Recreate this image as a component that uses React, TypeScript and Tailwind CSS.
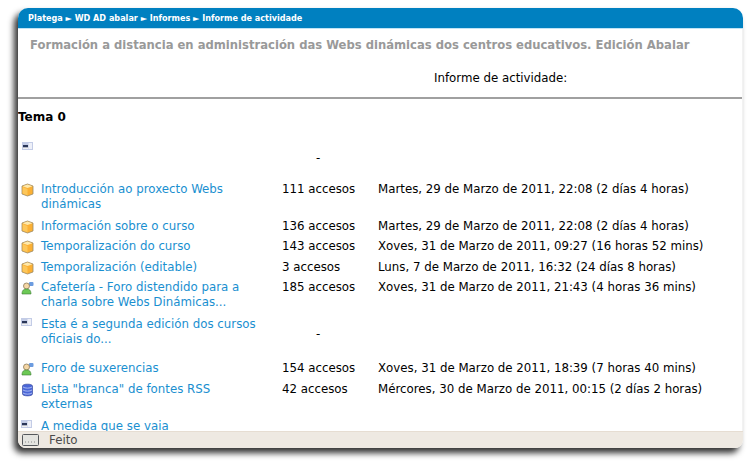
type IconKind = 'box' | 'forum' | 'label' | 'db';

interface Row {
  icon?: IconKind;
  title?: string;
  count?: string;
  date?: string;
  dash?: boolean;
  height: string;
}

const rows: Row[] = [
  { icon: 'box', title: 'Introducción ao proxecto Webs dinámicas', count: '111 accesos', date: 'Martes, 29 de Marzo de 2011, 22:08 (2 días 4 horas)', height: 'h-[37px]' },
  { icon: 'box', title: 'Información sobre o curso', count: '136 accesos', date: 'Martes, 29 de Marzo de 2011, 22:08 (2 días 4 horas)', height: 'h-[20.5px]' },
  { icon: 'box', title: 'Temporalización do curso', count: '143 accesos', date: 'Xoves, 31 de Marzo de 2011, 09:27 (16 horas 52 mins)', height: 'h-[20.5px]' },
  { icon: 'box', title: 'Temporalización (editable)', count: '3 accesos', date: 'Luns, 7 de Marzo de 2011, 16:32 (24 días 8 horas)', height: 'h-[20.5px]' },
  { icon: 'forum', title: 'Cafetería - Foro distendido para a charla sobre Webs Dinámicas...', count: '185 accesos', date: 'Xoves, 31 de Marzo de 2011, 21:43 (4 horas 36 mins)', height: 'h-[37px]' },
  { icon: 'label', title: 'Esta é a segunda edición dos cursos oficiais do...', dash: true, height: 'h-[44px]' },
  { icon: 'forum', title: 'Foro de suxerencias', count: '154 accesos', date: 'Xoves, 31 de Marzo de 2011, 18:39 (7 horas 40 mins)', height: 'h-[20.5px]' },
  { icon: 'db', title: 'Lista "branca" de fontes RSS externas', count: '42 accesos', date: 'Mércores, 30 de Marzo de 2011, 00:15 (2 días 2 horas)', height: 'h-[37px]' },
  { icon: 'label', title: 'A medida que se vaia', height: 'h-[20px]' },
];

function RowIcon({ kind }: { kind: IconKind }) {
  if (kind === 'box') {
    return (
      <svg width="13" height="14" viewBox="0 0 13 14">
        <path d="M6.5 1 L12 3 V11 L6.5 13 L1 11 V3 Z" fill="#fbb034" stroke="#9a8a68" strokeWidth="0.8" />
        <path d="M6.5 1.4 L11.4 3.2 L6.5 5 L1.6 3.2 Z" fill="#fde9ad" />
        <path d="M1.6 4 L6.5 6 V12.3 L1.6 10.6 Z" fill="#fdc75a" />
      </svg>
    );
  }
  if (kind === 'forum') {
    return (
      <svg width="13" height="14" viewBox="0 0 13 14">
        <rect x="8" y="1" width="4.5" height="4" rx="1" fill="#6c9ce0" />
        <circle cx="5.5" cy="5" r="3" fill="#f6d7a6" stroke="#8a7a58" strokeWidth="0.8" />
        <path d="M1 13 C1 9 3 8 5.5 8 C8 8 10 9 10 13 Z" fill="#6cc955" stroke="#3d7a33" strokeWidth="0.6" />
      </svg>
    );
  }
  if (kind === 'db') {
    return (
      <svg width="13" height="14" viewBox="0 0 13 14">
        <path d="M1.5 3 C1.5 0.5 11.5 0.5 11.5 3 V11 C11.5 13.5 1.5 13.5 1.5 11 Z" fill="#4a66d8" stroke="#2e3f96" strokeWidth="0.6" />
        <path d="M2 4 C4 5.5 9 5.5 11 4 M2 7 C4 8.5 9 8.5 11 7 M2 10 C4 11.5 9 11.5 11 10" fill="none" stroke="#b5c4f5" strokeWidth="0.9" />
      </svg>
    );
  }
  return (
    <svg width="11" height="8" viewBox="0 0 11 8">
      <rect width="11" height="8" fill="#c3cce6" />
      <rect x="6.5" y="1" width="3.5" height="6" fill="#eef0f8" />
      <rect x="1" y="3" width="5" height="2.5" fill="#2a3658" />
      <rect x="1" y="5.5" width="5" height="1.5" fill="#f0f0f0" />
    </svg>
  );
}

export default function App() {
  return (
    <div className="h-[466px] w-[749px] overflow-hidden bg-white pl-[18px] pt-[8px] font-['DejaVu_Sans',sans-serif] text-[11.8px] leading-[15px] text-black">
      <div className="flex h-[440px] w-[725px] flex-col overflow-hidden rounded-t-[10px] rounded-b-[8px] bg-white shadow-[-4px_5px_6px_rgba(0,0,0,0.8)]">
        <div className="flex h-[21px] shrink-0 items-center border-b border-[#bfe3f5] bg-[#0080c0] pl-[10px] text-[8.1px] font-bold text-white">
          Platega ► WD AD abalar ► Informes ► Informe de actividade
        </div>

        <div className="min-h-0 flex-1 overflow-hidden border-r border-[#f2f2f2]">
          <h1 className="pl-[12px] pt-[9px] text-[11.6px] font-bold leading-[15px] text-[#999999]">
            Formación a distancia en administración das Webs dinámicas dos centros educativos. Edición Abalar
          </h1>
          <p className="pl-[416px] pt-[18px]">Informe de actividade:</p>
          <hr className="mt-[11px] border-t-2 border-[#a0a0a0]" />
          <h2 className="pt-[10px] text-[12px] font-bold leading-[16px]">Tema 0</h2>

          <div className="grid h-[56.5px] grid-cols-[23px_241px_96px_1fr] pt-[16px]">
            <div className="pl-[4px] pt-[1px]">
              <RowIcon kind="label" />
            </div>
            <div />
            <div className="pl-[34px] pt-[10px]">-</div>
          </div>

          {rows.map((row, i) => (
            <div key={i} className={`grid grid-cols-[23px_241px_96px_1fr] ${row.height}`}>
              <div className="pl-[3px] pt-[1px]">{row.icon && <RowIcon kind={row.icon} />}</div>
              <a className="w-[218px] text-[#1a8fd0]">{row.title}</a>
              {row.dash ? <div className="pl-[34px] pt-[10px]">-</div> : <div>{row.count}</div>}
              <div>{row.date}</div>
            </div>
          ))}
        </div>

        <div className="flex h-[17px] shrink-0 items-center border-t border-[#e6ddd2] bg-[#eee9e2] pl-[4px] text-[#4a4a4a]">
          <svg width="17" height="12" viewBox="0 0 17 12">
            <rect x="0.5" y="0.5" width="16" height="11" rx="1" fill="#e4e4e0" stroke="#55585c" />
            <path d="M3 8 H14" stroke="#8a8a8a" strokeDasharray="1 2" />
          </svg>
          <span className="pl-[10px]">Feito</span>
        </div>
      </div>
    </div>
  );
}
